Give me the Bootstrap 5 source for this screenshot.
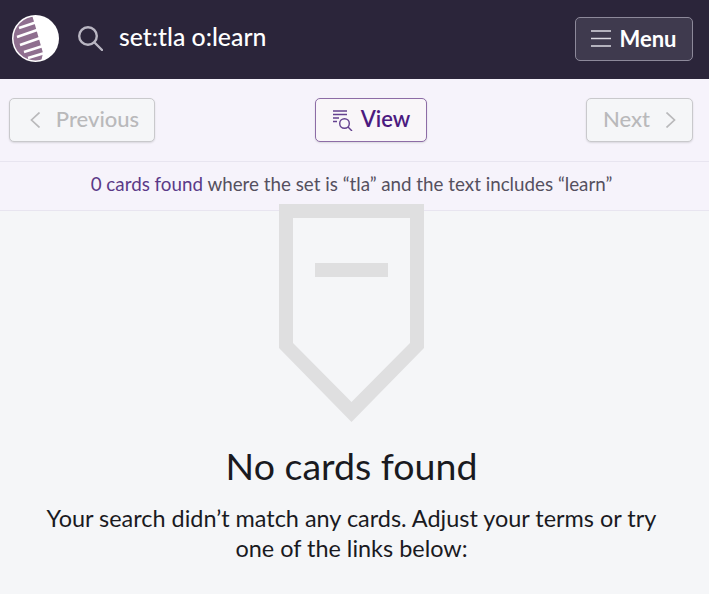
<!DOCTYPE html>
<html lang="en">
<head>
  <meta charset="UTF-8">
  <title>No cards found</title>
  <link href="https://cdn.jsdelivr.net/npm/bootstrap@5.3.3/dist/css/bootstrap.min.css" rel="stylesheet">
  <style>
    body {
      background-color: #f5f6f8;
      font-family: Lato, "Liberation Sans", sans-serif;
      color: #1a1a1f;
      overflow: hidden;
    }
    .top-bar {
      height: 79px;
      background-color: #2b253a;
      padding: 0 16px 2px 12px;
    }
    .logo-icon {
      width: 47px;
      height: 47px;
    }
    .search-icon {
      width: 25px;
      height: 25px;
      margin-left: 19px;
      margin-right: 16px;
    }
    .query-text {
      font-size: 24.8px;
      color: #fff;
      font-weight: 500;
      line-height: 1;
      margin-top: -2px;
    }
    .menu-btn {
      width: 118px;
      height: 44px;
      background-color: #3f3a4e;
      border: 1px solid #8d899a;
      border-radius: 5px;
      color: #fff;
      font-size: 22px;
      font-weight: 700;
      padding: 0;
    }
    .menu-btn:hover {
      background-color: #3f3a4e;
      color: #fff;
      border-color: #8d899a;
    }
    .tool-bar {
      height: 83px;
      background-color: #f6f3fb;
      border-bottom: 1px solid #e8e5f0;
      padding: 0 16px 0 9px;
    }
    .tool-btn {
      height: 44px;
      border-radius: 5px;
      font-size: 22px;
      font-weight: 500;
      padding: 0 0 4px;
      box-shadow: 0 1px 2px rgba(0, 0, 0, 0.12);
    }
    .tool-btn svg { margin-top: 4px; }
    .tool-btn:disabled {
      background-color: #f5f6f8;
      border: 1px solid #c9c9cc;
      color: #b9b9bb;
      opacity: 1;
    }
    .prev-btn {
      width: 146px;
      padding-left: 5px;
    }
    .next-btn { width: 107px; }
    .view-btn {
      width: 112px;
      padding-left: 2px;
      background-color: #f9f6f9;
      border: 1px solid #8d6ca6;
      color: #4b1a80;
      font-weight: 600;
    }
    .view-btn:hover {
      background-color: #f9f6f9;
      border-color: #8d6ca6;
      color: #4b1a80;
    }
    .summary-bar {
      height: 49px;
      background-color: #f6f3fb;
      border-bottom: 1px solid #e8e5f0;
      font-size: 18.8px;
      color: #55505f;
      padding: 0 6px 4px 0;
    }
    .summary-count { color: #5b3a88; }
    .empty-wrap { padding-right: 6px; }
    .empty-icon {
      display: block;
      width: 145px;
      height: 218px;
      margin: -7px auto 0;
      position: relative;
    }
    .empty-title {
      font-size: 37.5px;
      font-weight: 400;
      line-height: 46px;
      margin: 21px 0 14px;
      color: #1a1a1f;
    }
    .empty-text {
      font-size: 23.45px;
      line-height: 30px;
      margin: 0 auto;
      width: 640px;
    }
  </style>
</head>
<body>

  <div class="top-bar d-flex align-items-center">
    <svg class="logo-icon flex-shrink-0" viewBox="0 0 47 47">
      <defs><clipPath id="disc"><circle cx="23.5" cy="23.5" r="22"/></clipPath></defs>
      <circle cx="23.5" cy="23.5" r="23.5" fill="#fff"/>
      <g clip-path="url(#disc)">
        <path fill="#8f6f8f" d="M0 0H20L23 10 25 17 27 24 29 31 31 38 29 47H0Z"/>
        <g stroke="#fff" stroke-width="2.4" fill="none">
          <path d="M7 13 25 7"/>
          <path d="M5 22 28 14"/>
          <path d="M8 30 31 22"/>
          <path d="M12 37 34 30"/>
          <path d="M16 43 36 37"/>
        </g>
      </g>
    </svg>
    <svg class="search-icon flex-shrink-0" viewBox="0 0 25 25" fill="none" stroke="#b9b6c2" stroke-width="2.4">
      <circle cx="10" cy="10" r="8.8"/>
      <path d="M16.5 16.5 24 24" stroke-linecap="round"/>
    </svg>
    <span class="query-text flex-grow-1">set:tla o:learn</span>
    <button class="btn menu-btn d-flex align-items-center justify-content-center gap-2">
      <svg width="20" height="17" viewBox="0 0 20 17" stroke="#dcdae2" stroke-width="1.6">
        <path d="M0 1h20M0 8.5h20M0 16h20"/>
      </svg>
      Menu
    </button>
  </div>

  <div class="tool-bar d-flex align-items-center justify-content-between">
    <button class="btn tool-btn prev-btn d-flex align-items-center justify-content-center gap-3" disabled>
      <svg width="10" height="16" viewBox="0 0 10 16" fill="none" stroke="#b9b9bb" stroke-width="1.7"><path d="M9.5 .5 1.5 8l8 7.5"/></svg>
      Previous
    </button>
    <button class="btn tool-btn view-btn d-flex align-items-center justify-content-center gap-2">
      <svg width="20" height="21" viewBox="0 0 20 21" fill="none" stroke="#64418f" stroke-width="1.4">
        <path d="M0 1h14M0 4.5h14M0 8h6M0 11.5h4"/>
        <circle cx="11.5" cy="13.5" r="4.8"/>
        <path d="M15 17 19 21"/>
      </svg>
      View
    </button>
    <button class="btn tool-btn next-btn d-flex align-items-center justify-content-center gap-3" disabled>
      Next
      <svg width="10" height="16" viewBox="0 0 10 16" fill="none" stroke="#b9b9bb" stroke-width="1.7"><path d="M.5 .5 8.5 8l-8 7.5"/></svg>
    </button>
  </div>

  <div class="summary-bar d-flex align-items-center justify-content-center">
    <span><span class="summary-count">0 cards found</span> where the set is “tla” and the text includes “learn”</span>
  </div>

  <div class="empty-wrap text-center">
    <svg class="empty-icon" viewBox="0 0 145 218">
      <path fill="#dfdfe0" fill-rule="evenodd" d="M0 0H145V144L72.5 218 0 144ZM14 14V139L72.5 198 131 139V14Z"/>
      <rect x="36" y="59" width="73" height="14" fill="#dfdfe0"/>
    </svg>
    <h1 class="empty-title">No cards found</h1>
    <p class="empty-text">Your search didn’t match any cards. Adjust your terms or try one of the links below:</p>
  </div>

</body>
</html>
